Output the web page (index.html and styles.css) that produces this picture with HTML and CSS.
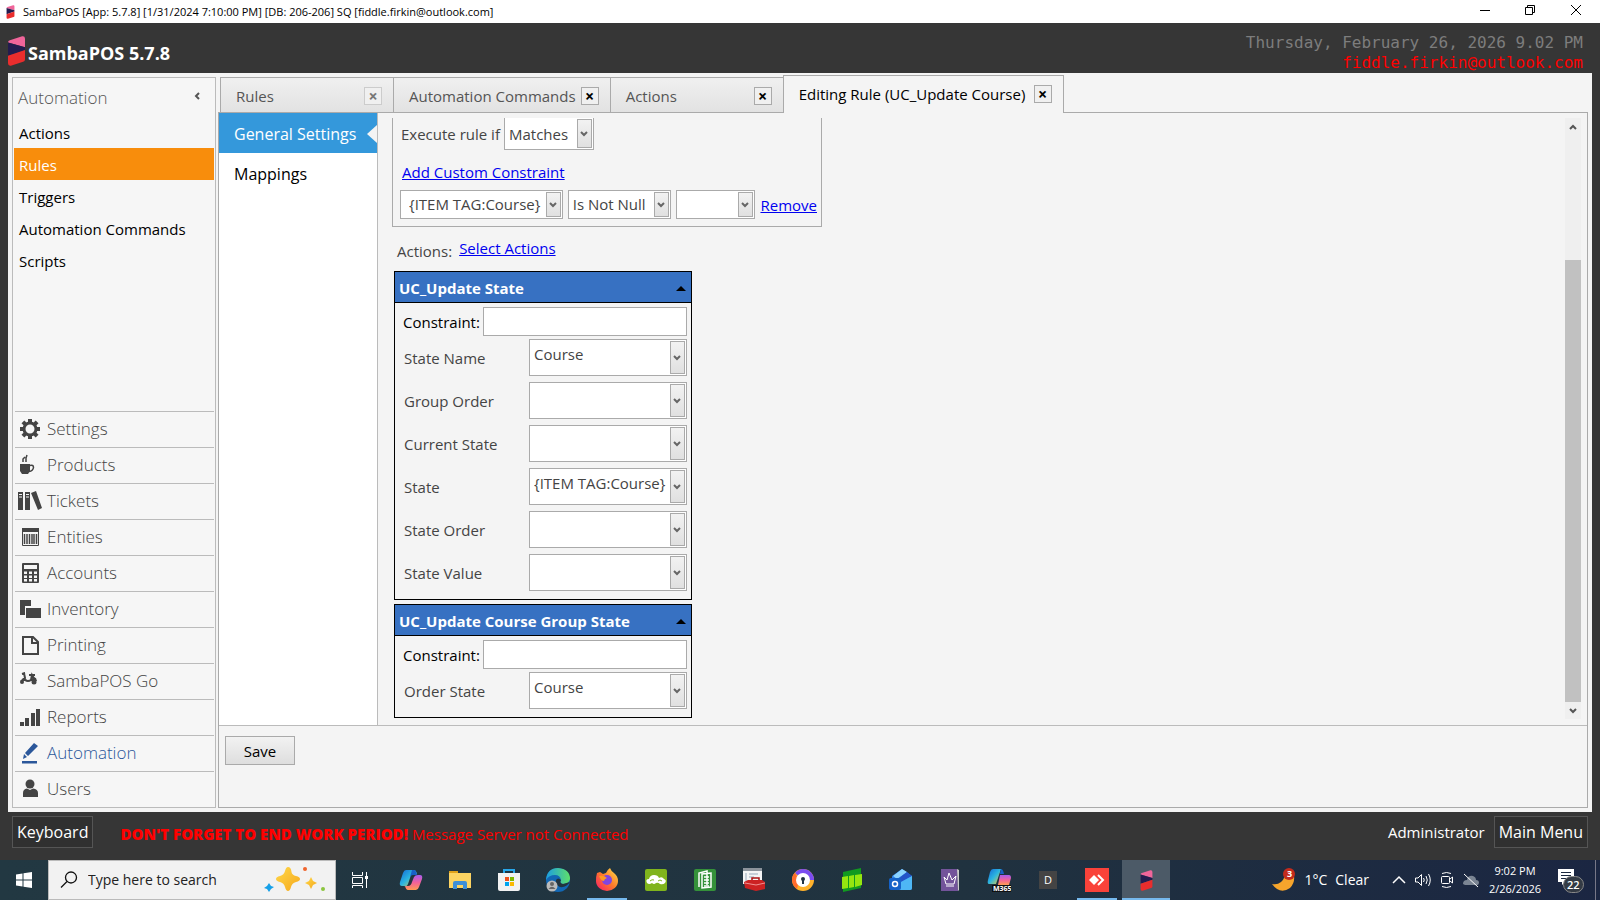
FILE: index.html
```html
<!DOCTYPE html>
<html lang="en">
<head>
    <meta charset="UTF-8">
    <meta name="viewport" content="width=device-width, initial-scale=1.0">
    <title>SambaPOS</title>
    <link rel="stylesheet" href="styles.css">
</head>
<body>
    <svg class="defs" aria-hidden="true">
        <defs>
            <symbol id="samba" viewBox="0 0 18 32">
                <path d="M0 7Q0 5 2 4.500L15 .5Q18 0 18 3V12L0 7z" fill="#f0659a"/>
                <path d="M0 7L18 12V15L0 21z" fill="#231c4f"/>
                <path d="M0 21L18 15V25Q18 27 16 27.500L3 31.500Q0 32 0 29z" fill="#e92d2d"/>
            </symbol>
            <linearGradient id="blue" x2="1" y2="1"><stop offset="0" stop-color="#1468d8"/><stop offset=".5" stop-color="#2bb5e0"/><stop offset="1" stop-color="#f3d13a"/></linearGradient>
            <linearGradient id="pink" x2="0" y2="1"><stop offset="0" stop-color="#a75cf0"/><stop offset=".5" stop-color="#f2619a"/><stop offset="1" stop-color="#ff9b52"/></linearGradient>
            <linearGradient id="fire" x1="1" x2="0" y2="1"><stop offset="0" stop-color="#ffe34a"/><stop offset=".5" stop-color="#ff7a2a"/><stop offset="1" stop-color="#f5156c"/></linearGradient>
            <linearGradient id="sea" x2="1"><stop offset="0" stop-color="#1b9de2"/><stop offset="1" stop-color="#5fe06a"/></linearGradient>
            <linearGradient id="gold" y2="1" x2="1"><stop offset="0" stop-color="#ffd84a"/><stop offset="1" stop-color="#f5a81c"/></linearGradient>
        </defs>
    </svg>

    <div class="titlebar">
        <svg class="titlebar-logo"><use href="#samba"/></svg>
        <span class="titlebar-text">SambaPOS [App: 5.7.8] [1/31/2024 7:10:00 PM] [DB: 206-206] SQ [fiddle.firkin@outlook.com]</span>
        <button class="win-btn" aria-label="Minimize"><svg width="10" height="10"><path d="M0 5.500H10" stroke="#000"/></svg></button>
        <button class="win-btn" aria-label="Restore"><svg width="10" height="10" fill="none" stroke="#000"><path d="M.5 2.500H7.500V9.500H.5zM2.500 2.500V.5H9.500V7.500H7.500"/></svg></button>
        <button class="win-btn" aria-label="Close"><svg width="10" height="10"><path d="M0 0L10 10M10 0L0 10" stroke="#000"/></svg></button>
    </div>

    <header class="header">
        <svg class="logo"><use href="#samba"/></svg>
        <h1>SambaPOS 5.7.8</h1>
        <div class="clock">
            <div>Thursday, February 26, 2026 9.02 PM</div>
            <div class="account">fiddle.firkin@outlook.com</div>
        </div>
    </header>

    <main class="main">
        <aside class="sidebar">
            <div class="sidebar-head">
                <h2>Automation</h2>
                <button class="collapse" aria-label="Collapse"><svg width="6" height="8"><path d="M5 1L2 4L5 7" fill="none" stroke="#555" stroke-width="2"/></svg></button>
            </div>
            <nav class="sub-nav">
                <a href="#">Actions</a>
                <a href="#" class="active">Rules</a>
                <a href="#">Triggers</a>
                <a href="#">Automation Commands</a>
                <a href="#">Scripts</a>
            </nav>
            <nav class="main-nav">
                <a href="#"><svg viewBox="0 0 24 24"><g fill="#444"><path d="M10 2h4v20h-4z"/><path d="M2 10h20v4H2z"/><path d="M10 2h4v20h-4z" transform="rotate(45 12 12)"/><path d="M10 2h4v20h-4z" transform="rotate(-45 12 12)"/></g><circle cx="12" cy="12" r="6" fill="#f6f6f6" stroke="#444" stroke-width="3"/></svg>Settings</a>
                <a href="#"><svg viewBox="0 0 24 24"><path d="M2 11H12V18L10 21H4L2 18z" fill="#444"/><path d="M12 12.500Q15.500 11.500 15.500 14.500Q15 18 11 18.500M5 9V6L7 4M8 9V5L9 2" fill="none" stroke="#444" stroke-width="1.500"/></svg>Products</a>
                <a href="#"><svg viewBox="0 0 24 24"><path d="M0 3H5V21H0zM7 3H12V21H7zM13 4L18 2L24 19L20 21z" fill="#444"/><path d="M1 5.500H4M1 8H4M8 5.500H11M8 8H11" stroke="#f6f6f6"/></svg>Tickets</a>
                <a href="#"><svg viewBox="0 0 24 24"><path d="M4.500 4.500H20.500V20.500H4.500z" fill="none" stroke="#444"/><path d="M4 3H21V7H4z" fill="#444"/><path d="M6.500 9V19M9 9V19M11.500 9V19M14 9V19M16 9V19M18.500 9V19" stroke="#444" stroke-width="1.500"/></svg>Entities</a>
                <a href="#"><svg viewBox="0 0 24 24"><rect x="4" y="2" width="17" height="20" rx="1" fill="#444"/><path d="M6 4H19V8H6zM6 10.500H9V13H6zM11 10.500H14V13H11zM16 10.500H19V13H16zM6 14.500H9V17H6zM11 14.500H14V17H11zM16 14.500H19V17H16zM6 18H9V20.500H6zM11 18H14V20.500H11zM16 18H19V20.500H16z" fill="#f6f6f6"/></svg>Accounts</a>
                <a href="#"><svg viewBox="0 0 24 24"><path d="M2 3H13V9H7V18H2zM8 11H23V21H8z" fill="#444"/></svg>Inventory</a>
                <a href="#"><svg viewBox="0 0 24 24"><path d="M5 4H15L20 9V21H5zM14 4V10H20" fill="none" stroke="#444" stroke-width="2"/></svg>Printing</a>
                <a href="#"><svg viewBox="0 0 24 24"><path d="M4 5L7 4M6 4L7 9L4 11M7 11Q10 13 13 11L14 6L17 11" fill="none" stroke="#444" stroke-width="2"/><path d="M2 12L6 9L9 11H13L15 8L18 9L19 12z" fill="#444"/><path d="M11 6H17" stroke="#444" stroke-width="2"/><circle cx="4" cy="13" r="2" fill="#444"/><circle cx="16" cy="13" r="2.500" fill="#444"/></svg>SambaPOS Go</a>
                <a href="#"><svg viewBox="0 0 24 24"><path d="M2 17H6V21H2zM7 13H11V21H7zM13 8H17V21H13zM18 4H22V21H18z" fill="#444"/></svg>Reports</a>
                <a href="#" class="current"><svg viewBox="0 0 24 24"><path d="M16 2L20 5L10 15L7 12zM6 13L9 16L5 18z" fill="#2b579a"/><path d="M4 20H19V22.500H4z" fill="#2b579a"/></svg>Automation</a>
                <a href="#"><svg viewBox="0 0 24 24"><circle cx="12" cy="7" r="4.500" fill="#444"/><path d="M5 20V16Q5 12 9 11.500L12 13L15 11.500Q20 12 20 16V20z" fill="#444"/></svg>Users</a>
            </nav>
        </aside>

        <section class="workspace">
            <div class="tabs">
                <div class="tab dim"><span>Rules</span><button aria-label="Close Rules">×</button></div>
                <div class="tab"><span>Automation Commands</span><button aria-label="Close Automation Commands">×</button></div>
                <div class="tab"><span>Actions</span><button aria-label="Close Actions">×</button></div>
                <div class="tab active"><span>Editing Rule (UC_Update Course)</span><button aria-label="Close Editing Rule">×</button></div>
            </div>
            <div class="page">
                <div class="page-body">
                    <nav class="page-nav">
                        <a href="#" class="active">General Settings<svg width="10" height="18"><path d="M10 0V18L0 9z" fill="#f4f4f4"/></svg></a>
                        <a href="#">Mappings</a>
                    </nav>
                    <div class="form">
                        <div class="constraints">
                            <div class="match">
                                <label for="match">Execute rule if</label>
                                <select id="match" class="combo"><option>Matches</option></select>
                            </div>
                            <a href="#" class="add">Add Custom Constraint</a>
                            <div class="condition">
                                <select class="combo field-name" aria-label="Field"><option>{ITEM TAG:Course}</option></select>
                                <select class="combo operator" aria-label="Operator"><option>Is Not Null</option></select>
                                <select class="combo value" aria-label="Value"><option></option></select>
                                <a href="#">Remove</a>
                            </div>
                        </div>
                        <div class="actions-row"><span>Actions:</span><a href="#">Select Actions</a></div>

                        <section class="action">
                            <h3>UC_Update State<button aria-label="Collapse"><svg width="10" height="5"><path d="M0 5L5 0L10 5z"/></svg></button></h3>
                            <div class="action-body">
                                <div class="constraint"><label for="c1">Constraint:</label><input type="text" id="c1"></div>
                                <div class="param"><label for="p1">State Name</label><select class="combo" id="p1"><option>Course</option></select></div>
                                <div class="param"><label for="p2">Group Order</label><select class="combo" id="p2"><option></option></select></div>
                                <div class="param"><label for="p3">Current State</label><select class="combo" id="p3"><option></option></select></div>
                                <div class="param"><label for="p4">State</label><select class="combo" id="p4"><option>{ITEM TAG:Course}</option></select></div>
                                <div class="param"><label for="p5">State Order</label><select class="combo" id="p5"><option></option></select></div>
                                <div class="param"><label for="p6">State Value</label><select class="combo" id="p6"><option></option></select></div>
                            </div>
                        </section>
                        <section class="action">
                            <h3>UC_Update Course Group State<button aria-label="Collapse"><svg width="10" height="5"><path d="M0 5L5 0L10 5z"/></svg></button></h3>
                            <div class="action-body">
                                <div class="constraint"><label for="c2">Constraint:</label><input type="text" id="c2"></div>
                                <div class="param"><label for="p7">Order State</label><select class="combo" id="p7"><option>Course</option></select></div>
                            </div>
                        </section>
                    </div>
                    <div class="scrollbar">
                        <button aria-label="Scroll up"><svg width="8" height="6"><path d="M1 5L4 2L7 5" fill="none" stroke="#555" stroke-width="2"/></svg></button>
                        <div class="track"><div class="thumb"></div></div>
                        <button aria-label="Scroll down"><svg width="8" height="6"><path d="M1 1L4 4L7 1" fill="none" stroke="#555" stroke-width="2"/></svg></button>
                    </div>
                </div>
                <div class="page-foot"><button class="save">Save</button></div>
            </div>
        </section>
    </main>

    <footer class="status">
        <button>Keyboard</button>
        <div class="message"><b>DON'T FORGET TO END WORK PERIOD!</b> Message Server not Connected</div>
        <span class="user">Administrator</span>
        <button>Main Menu</button>
    </footer>

    <div class="taskbar">
        <button class="start" aria-label="Start"><svg width="16" height="16"><path d="M0 2.500L6.500 1.500V7.500H0zM7.500 1.300L16 0V7.500H7.500zM0 8.500H6.500V14.500L0 13.500zM7.500 8.500H16V16L7.500 14.700z" fill="#fff"/></svg></button>
        <div class="search">
            <svg width="18" height="18" viewBox="0 0 18 18"><circle cx="11" cy="6.500" r="5.500" fill="none" stroke="#111" stroke-width="1.300"/><path d="M7 10.500L1 16.500" stroke="#111" stroke-width="1.300"/></svg>
            <input type="text" placeholder="Type here to search" aria-label="Type here to search">
            <svg width="62" height="26" viewBox="0 0 62 26"><path d="M24 0Q27 0 27.500 5Q28 8 32 9Q36 10 36 12Q36 14 32 15Q28 16 27 20Q26 24 24 24Q22 24 21 20Q20 16 16 15Q12 14 12 12Q12 10 16 9Q20 8 21 4Q22 0 24 0z" fill="url(#gold)"/><path d="M47 10L49 14L53 16L49 18L47 22L45 18L41 16L45 14z" fill="url(#gold)"/><path d="M5 16L7 19L10 20L7 22L5 25L3 22L0 21L3 19z" fill="#16a0e8"/><circle cx="41" cy="2" r="2" fill="#f0642c"/><circle cx="59" cy="22" r="2" fill="#8cc63f"/></svg>
        </div>
        <button class="task-view" aria-label="Task View"><svg width="16" height="16" fill="none" stroke="#fff"><path d="M.5 0V3.500H10.500V0M.5 5.500H10.500V11.500H.5zM.5 16V13.500H10.500V16M14.500 0V16"/><path d="M13 4H16V7H13z" fill="#fff" stroke="none"/></svg></button>

        <div class="apps">
            <button aria-label="Copilot"><svg viewBox="0 0 24 24"><path d="M7 2H15Q17 2 18 6H14Q12 6 11 10L9 16Q8 19 5 18H3Q0 18 1 14L4 5Q5 2 7 2z" fill="url(#blue)"/><path d="M13 2H15Q17 2 18 7H14Q12 7 11 9z" fill="#1860c8"/><path d="M17 22H9Q7 22 6 18H9Q12 18 13 14L15 9Q16 7 19 7H21Q24 7 23 11L20 19Q19 22 17 22z" fill="url(#pink)"/></svg></button>
            <button aria-label="File Explorer"><svg viewBox="0 0 24 24"><path d="M1 3H10V6H1z" fill="#e0a21a"/><path d="M1 5H23V20H1z" fill="#fcd462"/><path d="M5 21V15Q5 13 7 13H17Q19 13 19 15V21H15V17H9V21z" fill="#3d8fd8"/></svg></button>
            <button aria-label="Store"><svg viewBox="0 0 24 24"><path d="M7 6V2H17V6" fill="none" stroke="#27a7ea" stroke-width="2"/><path d="M1 5H23V21Q23 23 21 23H3Q1 23 1 21z" fill="#f2f2f2"/><path d="M8 9H12V13H8z" fill="#f1511b"/><path d="M13 9H17V13H13z" fill="#7fba00"/><path d="M8 14H12V18H8z" fill="#00a4ef"/><path d="M13 14H17V18H13z" fill="#fbb900"/></svg></button>
            <button aria-label="Edge"><svg viewBox="0 0 24 24"><circle cx="12" cy="12" r="12" fill="#1267b4"/><path d="M0 12Q1 0 12 0Q24 1 24 11Q23 16 17 16Q13 15 15 12Q14 7 9 7Q3 7 0 12z" fill="url(#sea)"/><path d="M15 12Q13 15 17 16L24 14Q20 20 14 19Q9 17 10 12Q12 9 15 12z" fill="#22343f"/><circle cx="6" cy="18" r="5.500" fill="#bbb"/><circle cx="6" cy="16" r="2" fill="#666"/><path d="M2.500 21Q6 16.500 9.500 21z" fill="#666"/></svg></button>
            <button class="open" aria-label="Firefox"><svg viewBox="0 0 24 24"><path d="M2 5L5 4L8 6L11 5Q12 2 15 0Q16 3 19 5Q23 8 23 13A11 10 0 0 1 1 13Q1 8 2 5z" fill="url(#fire)"/><circle cx="12" cy="12" r="5" fill="#8145e0"/><path d="M4 8Q9 7 12 10Q9 11 9 13Q6 13 4 8z" fill="#ff9a22"/></svg></button>
            <button aria-label="Cloud"><svg viewBox="0 0 24 24"><rect x="1" y="1" width="22" height="22" rx="2" fill="#80b41c"/><path d="M3 15Q1 11 5 11Q6 7 10 7Q14 7 15 10Q18 8 20 11Q23 12 21 15Q19 17 16 16Q14 14 12 15Q10 17 8 15Q5 17 3 15z" fill="#fff"/><path d="M6 13Q8 11 10 12M14 13Q16 11 18 13" fill="none" stroke="#80b41c"/></svg></button>
            <button aria-label="Notes"><svg viewBox="0 0 24 24"><rect x="1" y="1" width="22" height="22" rx="2" fill="#35913a"/><path d="M6 19V5L14 3V17M9 20V6L18 5V19z" fill="none" stroke="#fff" stroke-width="1.500"/><path d="M11 9H16M11 12H16M11 15H16M11 18H16" stroke="#fff" stroke-width="1.500"/></svg></button>
            <button aria-label="Tools"><svg viewBox="0 0 24 24"><path d="M1 0H20V16H1z" fill="#f4f4f4"/><path d="M1 0H20V3H1z" fill="#8b939b"/><path d="M4 5V14M7 6H16M7 9H12" stroke="#9ab"/><path d="M10 13V10H17V12" fill="none" stroke="#a11" stroke-width="1.500"/><path d="M2 14L6 12H20L23 14V21L14 23L3 20z" fill="#cc2222"/><path d="M3 15L14 17L23 15" stroke="#f09090" fill="none"/></svg></button>
            <button aria-label="DuckDuckGo"><svg viewBox="0 0 24 24"><circle cx="12" cy="12" r="11" fill="#ffb22c"/><path d="M12 1A11 11 0 0 1 23 12L12 12L4 5Q7 1 12 1z" fill="#7a4cf0"/><path d="M1 12Q1 7 4 5L8 12L6 21Q1 17 1 12z" fill="#ff6c2c"/><circle cx="12" cy="12" r="7" fill="#fff"/><circle cx="12" cy="11" r="2" fill="#234"/><path d="M11 11H13V16H11z" fill="#234"/></svg></button>
            <button aria-label="Bars"><svg viewBox="0 0 24 24"><path d="M3 4L21 0V20L3 24z" fill="#119a20"/><path d="M2 9L8 8V20L2 21zM9 8L14 7V19L9 20zM15 7L22 6V17L15 19z" fill="#96e610"/></svg></button>
            <button aria-label="Outlook"><svg viewBox="0 0 24 24"><path d="M3 8L13 1L23 8V20Q23 22 21 22H3z" fill="#2a7de8"/><path d="M4 8L13 1L18 4L8 11z" fill="#8bd4ff"/><path d="M18 4L23 8L12 14L9 11z" fill="#2354c8"/><path d="M12 14L23 8V20Q23 22 21 22H9z" fill="#4eb7f5"/><rect y="10" width="12" height="12" rx="2" fill="#1562c8"/><circle cx="6" cy="16" r="2.500" fill="none" stroke="#fff" stroke-width="1.500"/></svg></button>
            <button aria-label="Crown"><svg viewBox="0 0 24 24"><path d="M3 1H19L20 23H3z" fill="#73549a"/><path d="M19 1L21 2V22L20 23z" fill="#ccc"/><path d="M6 9L9 12L11 5L14 12L18 8L16 16H8z" fill="none" stroke="#fff"/><path d="M8 18H16" stroke="#fff"/></svg></button>
            <button aria-label="M365 Copilot"><svg viewBox="0 0 24 24"><path d="M6 1H14L12 7L9 16H2Q0 16 1 12L3 4Q4 1 6 1z" fill="url(#blue)"/><path d="M14 1Q16 1 17 6H13z" fill="#1860c8"/><path d="M13 7H22Q24 7 24 10L22 17H11z" fill="url(#pink)"/><path d="M5 17H24V24H5z" fill="#111"/><text x="6" y="23" class="badge-text">M365</text></svg></button>
            <button aria-label="D"><span class="letter">D</span></button>
            <button class="open" aria-label="AnyDesk"><svg viewBox="0 0 24 24"><path d="M0 0H24V24H0z" fill="#f9423a"/><path d="M4 12L9 7L14 12L9 17z" fill="#fff"/><path d="M13 7L18 12L13 17" fill="none" stroke="#fff" stroke-width="2"/></svg></button>
            <button class="open selected" aria-label="SambaPOS"><svg viewBox="0 0 24 24"><use href="#samba" x="6" y="2" width="13" height="21"/></svg></button>
        </div>

        <div class="tray">
            <button class="weather">
                <svg width="24" height="24" viewBox="0 0 24 24"><path d="M0 16Q9 18 13 8H22Q23 15 18 20Q8 27 0 16z" fill="#f6a52c"/><circle cx="17" cy="6" r="6" fill="#c42b1c"/><text x="15" y="9" class="count">3</text></svg>
                <span>1°C</span><span>Clear</span>
            </button>
            <button aria-label="Hidden icons"><svg width="16" height="16" fill="none" stroke="#fff" stroke-width="1.500"><path d="M2 11L8 5L14 11"/></svg></button>
            <button aria-label="Volume"><svg width="16" height="16" fill="none" stroke="#fff"><path d="M.5 6H3L6.500 2.500V13.500L3 10H.5zM8.500 6Q10 8 8.500 10M11 4Q13.500 8 11 12M13.500 2Q17 8 13.500 14"/></svg></button>
            <button aria-label="Meet now"><svg width="16" height="16" fill="none" stroke="#fff"><rect x="2.500" y="4.500" width="8" height="7" rx="1"/><path d="M11 7L13.500 5V11L11 9M3 1.500Q7.500 -.5 12 1.500M3 14.500Q7.500 16.500 12 14.500"/></svg></button>
            <button aria-label="OneDrive"><svg width="16" height="16"><path d="M0 12Q0 8 4 8Q5 3 10 4Q13 5 13 8Q16 8 16 11L15 13H2z" fill="#7b8593"/><path d="M1 2L15 15" stroke="#fff"/></svg></button>
            <div class="time"><div>9:02 PM</div><div>2/26/2026</div></div>
            <button class="notes" aria-label="Notifications">
                <svg width="28" height="26" viewBox="0 0 28 26"><path d="M0 1H16V14H7L4 17V14H0z" fill="#fff"/><path d="M3 4.500H13M3 7.500H13M3 10.500H10" stroke="#1b2840"/><rect x="5.500" y="8.500" width="20" height="16" rx="8" fill="#333a44" stroke="#888"/><text x="9" y="21" class="total">22</text></svg>
            </button>
        </div>
    </div>
</body>
</html>
```
FILE: styles.css
```css
* {
    box-sizing: border-box;
}
body {
    display: flex;
    flex-direction: column;
    min-height: 100vh;
    margin: 0;
    background-color: #363636;
    color: #444;
    font-family: "Open Sans", "Noto Sans", sans-serif;
    font-size: 15px;
    line-height: 20px;
}
button, input, select {
    font: inherit;
    color: inherit;
    border-radius: 0;
}
button {
    padding: 0;
    border: none;
    background: none;
}
h1, h2, h3 {
    margin: 0;
}
a {
    color: #0000f0;
}
svg {
    display: block;
    flex: none;
}
.defs {
    position: absolute;
    width: 0;
    height: 0;
}

/* Window title */
.titlebar {
    display: flex;
    align-items: center;
    height: 23px;
    background-color: #fff;
    color: #000;
    font-size: 11px;
}
.titlebar-logo {
    width: 9px;
    height: 14px;
    margin: 0 8px 0 6px;
}
.titlebar-text {
    flex: 1;
}
.win-btn {
    display: flex;
    justify-content: center;
    width: 45px;
    padding-bottom: 3px;
}
.titlebar .win-btn:last-child {
    width: 48px;
}

/* App header */
.header {
    display: flex;
    height: 50px;
    padding: 0 17px 0 8px;
}
.logo {
    width: 17px;
    height: 32px;
    margin-top: 12px;
}
.header h1 {
    flex: 1;
    padding: 17px 0 0 3px;
    color: #fff;
    font-size: 18px;
    font-weight: 700;
    line-height: 26px;
}
.clock {
    padding-top: 10px;
    color: #7d7d7d;
    font-family: "DejaVu Sans Mono", monospace;
    font-size: 16px;
    text-align: right;
}
.account {
    color: #f00;
}

.main {
    display: flex;
    flex: 1;
    gap: 2px;
    margin: 0 8px;
    padding: 4px;
    background-color: #f4f4f4;
}

/* Left menu */
.sidebar {
    display: flex;
    flex-direction: column;
    width: 204px;
    border: 1px solid #bbb;
    background-color: #f6f6f6;
}
.sidebar-head {
    display: flex;
    justify-content: space-between;
    height: 38px;
    padding: 6px 15px 0 5px;
}
.sidebar-head h2 {
    color: #555;
    font-size: 17px;
    font-weight: 300;
    line-height: 28px;
}
.collapse {
    height: 24px;
}
.sub-nav a {
    display: block;
    height: 32px;
    margin: 0 1px;
    padding: 0 5px;
    color: #000;
    line-height: 34px;
    text-decoration: none;
}
.sub-nav a.active {
    background-color: #f88d0c;
    color: #fff;
}
.main-nav {
    margin: auto 1px 0 2px;
}
.main-nav a {
    display: flex;
    align-items: center;
    gap: 5px;
    height: 36px;
    padding: 0 3px 2px;
    border-top: 1px solid #bbb;
    color: #444;
    font-size: 17px;
    font-weight: 300;
    text-decoration: none;
}
.main-nav a.current {
    color: #2b579a;
}
.main-nav svg {
    width: 24px;
    height: 24px;
}

/* Tabs */
.workspace {
    display: flex;
    flex: 1;
    flex-direction: column;
}
.tabs {
    display: flex;
    align-items: flex-end;
    height: 36px;
    margin-bottom: -1px;
    padding-left: 2px;
}
.tab {
    display: flex;
    align-items: center;
    justify-content: space-between;
    min-width: 174px;
    height: 36px;
    margin-right: -1px;
    padding: 2px 11px 0 15px;
    border: 1px solid #aaa;
    background: linear-gradient(#f0f0f0, #e2e2e2);
    color: #555;
    z-index: 0;
}
.tab span {
    margin-right: 5px;
}
.tab button {
    width: 18px;
    height: 18px;
    border: 1px solid #aaa;
    background-color: #f0f0f0;
    color: #000;
    font-size: 16px;
    font-weight: 700;
    line-height: 16px;
}
.tab.dim button {
    border-color: #ccc;
    color: #777;
}
.tab.active {
    min-width: 281px;
    height: 38px;
    padding-bottom: 3px;
    border-bottom: none;
    background: #f4f4f4;
    color: #000;
    z-index: 1;
}

.page {
    display: flex;
    flex: 1;
    flex-direction: column;
    border: 1px solid #aaa;
}
.page-body {
    display: flex;
    flex: 1;
}
.page-nav {
    width: 159px;
    border-right: 1px solid #bbb;
    background-color: #fff;
}
.page-nav a {
    display: flex;
    align-items: center;
    justify-content: space-between;
    height: 40px;
    padding: 2px 0 0 15px;
    color: #000;
    font-size: 16px;
    text-decoration: none;
}
.page-nav a.active {
    background-color: #3498db;
    color: #fff;
}
.page-foot {
    height: 82px;
    padding: 10px 6px;
    border-top: 1px solid #bbb;
}
.save {
    width: 70px;
    height: 29px;
    border: 1px solid #aaa;
    background: linear-gradient(#f2f2f2, #dedede);
    color: #000;
    line-height: 28px;
}

/* Rule form */
.form {
    flex: 1;
    padding: 5px 14px 0;
}
.combo {
    height: 29px;
    padding: 0 18px 0 4px;
    border: 1px solid #aaa;
    outline: none;
    appearance: none;
    color: #444;
    background:
        url("data:image/svg+xml,%3Csvg xmlns='http://www.w3.org/2000/svg' width='8' height='6'%3E%3Cpath d='M1 1L4 4L7 1' fill='none' stroke='%23666' stroke-width='2'/%3E%3C/svg%3E") right 5px center no-repeat,
        linear-gradient(#f2f2f2, #e0e0e0) right 2px center / 13px calc(100% - 4px) no-repeat,
        linear-gradient(#aaa, #aaa) right 1px center / 15px calc(100% - 2px) no-repeat,
        #fff;
}
.constraints {
    width: 430px;
    padding: 0 4px 7px 7px;
    border: 1px solid #aaa;
    border-top: none;
}
.match {
    display: flex;
    gap: 4px;
    height: 37px;
    padding-left: 1px;
}
.match label {
    width: 99px;
    line-height: 32px;
    white-space: nowrap;
}
.match .combo {
    width: 90px;
    height: 32px;
    border-top: none;
}
.add {
    display: block;
    height: 35px;
    padding: 7px 2px 0;
}
.condition {
    display: flex;
    align-items: center;
    gap: 5px;
}
.condition .combo {
    padding-bottom: 1px;
}
.field-name {
    width: 163px;
    padding-left: 8px;
}
.operator {
    width: 103px;
}
.value {
    width: 80px;
}
.actions-row {
    display: flex;
    gap: 7px;
    height: 44px;
    padding: 11px 5px 0;
}
.actions-row span {
    padding-top: 3px;
}
.action {
    width: 298px;
    margin: 0 0 4px 2px;
    border: 1px solid #000;
}
.action h3 {
    display: flex;
    align-items: center;
    justify-content: space-between;
    height: 31px;
    padding: 2px 5px 0 4px;
    border-bottom: 1px solid #000;
    background-color: #3771c2;
    color: #fff;
    font-size: 15px;
    font-weight: 700;
}
.action h3 button {
    height: 14px;
}
.action-body {
    display: flex;
    flex-direction: column;
    gap: 6px;
    padding: 4px 4px 8px 8px;
}
.constraint {
    display: flex;
    align-items: center;
    justify-content: space-between;
    margin-bottom: -3px;
    color: #000;
}
.constraint input {
    width: 204px;
    height: 29px;
    border: 1px solid #aaa;
    background-color: #fff;
}
.param {
    display: flex;
    align-items: center;
    justify-content: space-between;
    padding-left: 1px;
}
.param .combo {
    width: 158px;
    height: 37px;
    padding-bottom: 8px;
}

.scrollbar {
    display: flex;
    flex-direction: column;
    width: 16px;
    margin: 5px 6px 6px 0;
    background-color: #efefef;
}
.scrollbar button {
    display: flex;
    align-items: center;
    justify-content: center;
    height: 17px;
}
.track {
    display: flex;
    flex: 1;
    flex-direction: column;
    justify-content: flex-end;
}
.thumb {
    height: 78%;
    background-color: #c1c1c1;
}

/* Status bar */
.status {
    display: flex;
    align-items: flex-start;
    height: 48px;
    padding: 4px 12px;
    color: #fff;
    font-size: 16px;
}
.status button {
    height: 32px;
    padding: 0 4px;
    border: 1px solid #555;
    background-color: #303030;
}
.message {
    flex: 1;
    padding: 8px 27px 0;
    color: #f00;
    font-size: 15px;
}
.message b {
    font-weight: 800;
}
.user {
    padding: 6px 9px 0;
    font-size: 15px;
}

/* Windows taskbar */
.taskbar {
    display: flex;
    height: 40px;
    background: linear-gradient(90deg, #223842, #20323f 60%, #1b2642);
    color: #fff;
}
.taskbar button {
    display: flex;
    align-items: center;
    justify-content: center;
}
.start, .task-view {
    width: 48px;
}
.search {
    display: flex;
    align-items: center;
    width: 288px;
    padding: 0 9px 0 11px;
    border: 1px solid #bbb;
    background-color: #f2f2f2;
}
.search input {
    flex: 1;
    min-width: 0;
    padding: 0 0 0 10px;
    border: none;
    background: none;
    font-size: 14px;
}
.search input::placeholder {
    color: #222;
    opacity: 1;
}
.apps {
    display: flex;
    gap: 1px;
    padding-left: 3px;
}
.apps button {
    width: 48px;
    border-bottom: 2px solid transparent;
    border-top: 2px solid transparent;
}
.apps svg {
    width: 24px;
    height: 24px;
}
.apps button.open {
    width: 40px;
    margin: 0 4px;
    border-bottom-color: #76b9ed;
}
.apps button.selected {
    width: 48px;
    margin: 0;
    border-top-color: #4c5a67;
    background-color: #4c5a67;
}
.letter {
    width: 18px;
    height: 18px;
    background-color: #444;
    font-size: 11px;
    line-height: 18px;
}
.badge-text {
    fill: #fff;
    font-size: 7px;
    font-weight: 700;
}
.tray {
    display: flex;
    margin-left: auto;
    padding-right: 4px;
}
.tray button {
    width: 24px;
}
.tray .weather {
    gap: 8px;
    width: auto;
    margin-right: 18px;
    font-size: 14px;
}
.count {
    fill: #fff;
    font-size: 9px;
    font-weight: 700;
}
.time {
    width: 64px;
    font-size: 11px;
    line-height: 18px;
    padding-top: 2px;
    text-align: center;
}
.tray .notes {
    width: 49px;
    padding: 2px 0 0 2px;
    border-right: 1px solid #778;
}
.total {
    fill: #fff;
    font-size: 11px;
    font-weight: 600;
}
```
